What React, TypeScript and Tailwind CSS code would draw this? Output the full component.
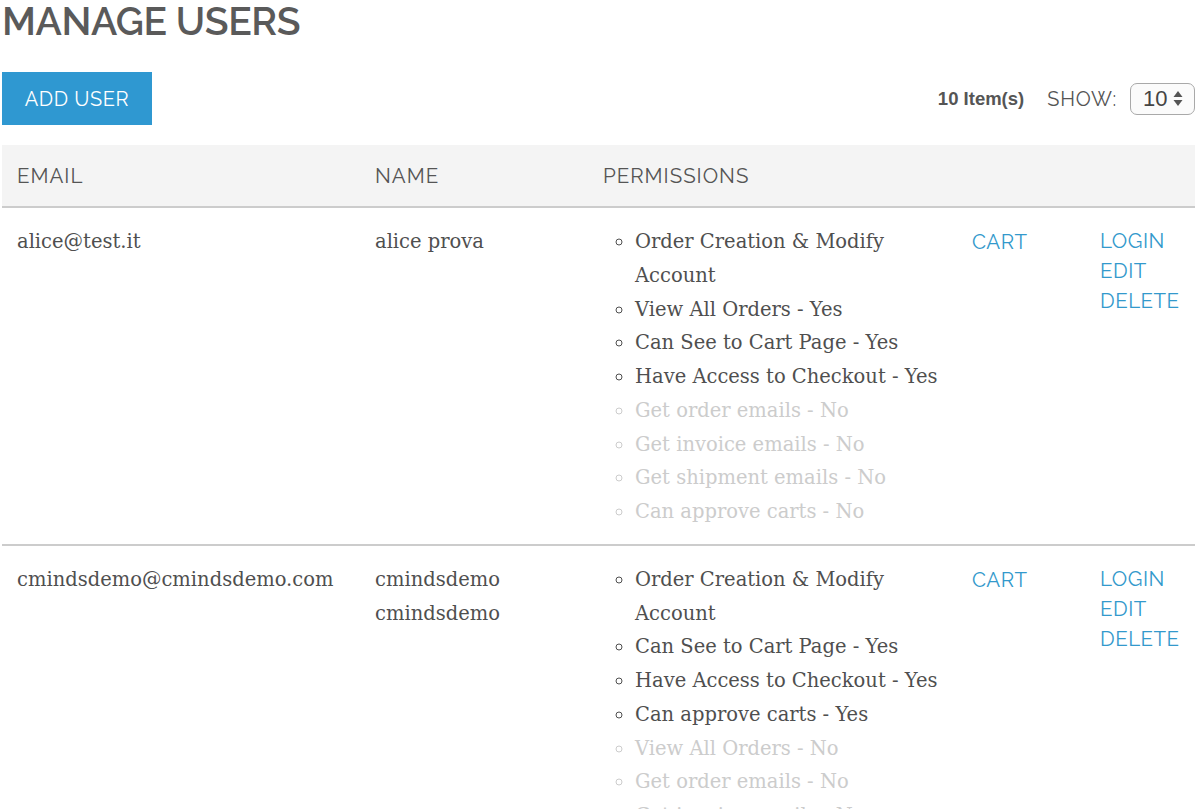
import React from "react";

type Perm = { text: string; on: boolean };
type User = { email: string; name: string[]; perms: Perm[] };

const users: User[] = [
  {
    email: "alice@test.it",
    name: ["alice prova"],
    perms: [
      { text: "Order Creation & Modify Account", on: true },
      { text: "View All Orders - Yes", on: true },
      { text: "Can See to Cart Page - Yes", on: true },
      { text: "Have Access to Checkout - Yes", on: true },
      { text: "Get order emails - No", on: false },
      { text: "Get invoice emails - No", on: false },
      { text: "Get shipment emails - No", on: false },
      { text: "Can approve carts - No", on: false },
    ],
  },
  {
    email: "cmindsdemo@cmindsdemo.com",
    name: ["cmindsdemo", "cmindsdemo"],
    perms: [
      { text: "Order Creation & Modify Account", on: true },
      { text: "Can See to Cart Page - Yes", on: true },
      { text: "Have Access to Checkout - Yes", on: true },
      { text: "Can approve carts - Yes", on: true },
      { text: "View All Orders - No", on: false },
      { text: "Get order emails - No", on: false },
      { text: "Get invoice emails - No", on: false },
      { text: "Get shipment emails - No", on: false },
    ],
  },
];

const sans = "font-['Raleway','Lato','Open_Sans',sans-serif]";
const serif = "font-['DejaVu_Serif','Liberation_Serif',serif]";

export default function App() {
  return (
    <div className="bg-white min-h-screen pl-[2px] pr-[5px] text-[#555555]">
      <h1 className={`${sans} text-[39px] leading-[40px] font-semibold tracking-[-0.4px] pt-[1px] text-[#5a5a5a]`}>
        MANAGE USERS
      </h1>
      <div className="flex items-center justify-between mt-[31px]">
        <button className={`${sans} bg-[#2f98d1] text-white text-[20px] tracking-[0.6px] w-[150px] h-[53px] flex items-center justify-center`}>
          ADD USER
        </button>
        <div className="flex items-center">
          <span className="font-['Liberation_Sans',Arial,sans-serif] font-bold text-[18.5px] text-[#555]">10 Item(s)</span>
          <span className={`${sans} text-[20px] tracking-[0.8px] ml-[23px] text-[#555]`}>SHOW:</span>
          <div className="ml-[13px] w-[65px] h-[32px] border border-[#a9a9a9] rounded-[7px] bg-[#fbfbfb] flex items-center pl-[12px] gap-[6px]">
            <span className="font-['Liberation_Sans',Arial,sans-serif] text-[22px] leading-none text-[#444]">10</span>
            <svg width="10" height="17" viewBox="0 0 10 17">
              <path d="M5 1 L9.5 7 L0.5 7 Z" fill="#555" />
              <path d="M5 16 L9.5 10 L0.5 10 Z" fill="#555" />
            </svg>
          </div>
        </div>
      </div>

      <table className="w-full mt-[20px] border-collapse table-fixed">
        <colgroup>
          <col className="w-[358px]" />
          <col className="w-[228px]" />
          <col className="w-[369px]" />
          <col className="w-[128px]" />
          <col />
        </colgroup>
        <thead>
          <tr className="bg-[#f4f4f4] border-b-2 border-[#cccccc]">
            <th className={`${sans} font-normal text-left text-[20.5px] tracking-[1px] h-[62px] pt-[2px] px-[15px] text-[#555]`}>EMAIL</th>
            <th className={`${sans} font-normal text-left text-[20.5px] tracking-[1px] pt-[2px] px-[15px] text-[#555]`}>NAME</th>
            <th className={`${sans} font-normal text-left text-[20.5px] tracking-[1px] pt-[2px] px-[15px] text-[#555]`}>PERMISSIONS</th>
            <th></th>
            <th></th>
          </tr>
        </thead>
        <tbody>
          {users.map((u, i) => (
            <tr key={i} className="border-b-2 border-[#cccccc] align-top">
              <td className={`${serif} text-[19.5px] leading-[33.75px] px-[15px] pt-[17px] pb-[15px] text-[#4f4f4f]`}>{u.email}</td>
              <td className={`${serif} text-[19.5px] leading-[33.75px] px-[15px] pt-[17px] text-[#4f4f4f]`}>
                {u.name.map((n, j) => (
                  <div key={j}>{n}</div>
                ))}
              </td>
              <td className={`${serif} text-[19.5px] leading-[33.75px] pl-[15px] pr-[10px] pt-[17px] pb-[15px]`}>
                <ul className="list-[circle] pl-[32px]">
                  {u.perms.map((p, j) => (
                    <li key={j} className={p.on ? "text-[#4f4f4f]" : "text-[#cccccc]"}>
                      {p.text}
                    </li>
                  ))}
                </ul>
              </td>
              <td className={`${sans} text-[20.5px] tracking-[0.5px] leading-[34px] px-[15px] pt-[17px]`}>
                <a className="text-[#3399cc]">CART</a>
              </td>
              <td className={`${sans} text-[20.5px] tracking-[0.5px] leading-[30px] px-[15px] pt-[18px]`}>
                <div className="flex flex-col text-[#3399cc]">
                  <a>LOGIN</a>
                  <a>EDIT</a>
                  <a>DELETE</a>
                </div>
              </td>
            </tr>
          ))}
        </tbody>
      </table>
    </div>
  );
}
